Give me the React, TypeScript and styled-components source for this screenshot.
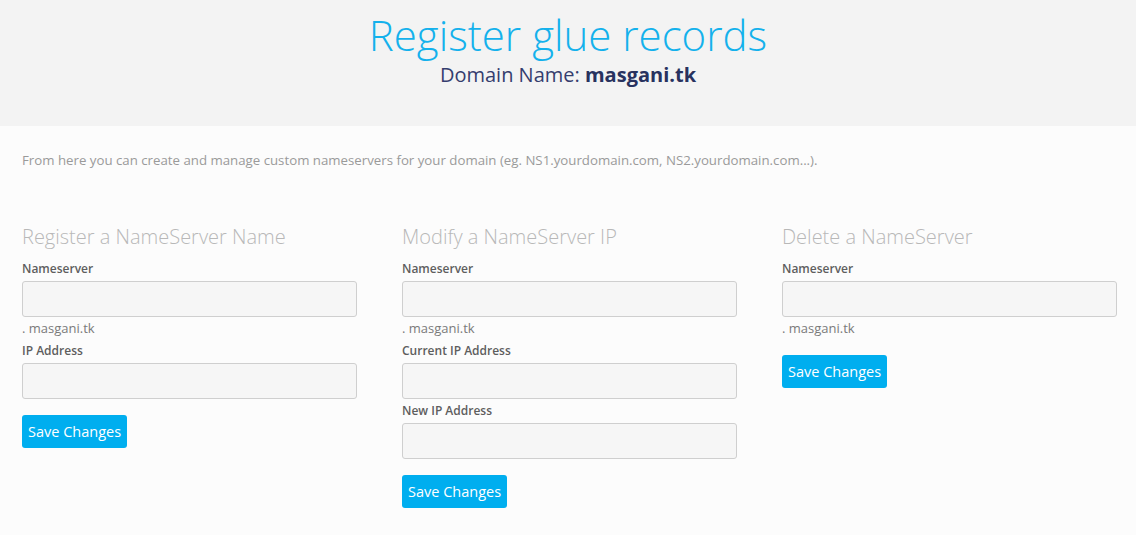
import React from "react";
import styled, { createGlobalStyle } from "styled-components";

const GlobalStyle = createGlobalStyle`
  body {
    margin: 0;
    background: #fcfcfc;
    font-family: "Open Sans", "Liberation Sans", sans-serif;
  }
`;

const Header = styled.header`
  height: 126px;
  background: #f3f3f3;
  display: flex;
  flex-direction: column;
  align-items: center;
  padding-top: 10px;
  box-sizing: border-box;
`;

const Title = styled.h1`
  margin: 0;
  font-size: 42px;
  font-weight: 300;
  line-height: 50px;
  color: #14b1ec;
`;

const Subtitle = styled.h2`
  margin: 2px 0 0;
  font-size: 20px;
  font-weight: 400;
  line-height: 26px;
  color: #353d6e;

  strong {
    font-weight: 700;
    color: #28325f;
  }
`;

const Content = styled.main`
  padding: 24px 22px 0;
`;

const Intro = styled.p`
  margin: 0 0 54px;
  font-size: 13.25px;
  line-height: 20px;
  color: #9a9a9a;
`;

const Columns = styled.div`
  display: grid;
  grid-template-columns: repeat(3, 335px);
  column-gap: 45px;
  align-items: start;
`;

const Panel = styled.section`
  display: flex;
  flex-direction: column;
`;

const PanelTitle = styled.h3`
  margin: 0 0 11px;
  font-size: 20px;
  font-weight: 300;
  line-height: 26px;
  color: #b8b8b8;
`;

const Label = styled.label`
  display: block;
  font-size: 12px;
  font-weight: 600;
  line-height: 16px;
  color: #5e5e5e;
  margin-bottom: 4px;
`;

const Input = styled.input<{ $gap?: number }>`
  box-sizing: border-box;
  width: 100%;
  height: 36px;
  background: #f6f6f6;
  border: 1px solid #cfcfcf;
  border-radius: 3px;
  margin-bottom: ${(p) => p.$gap ?? 4}px;
`;

const Suffix = styled.div`
  font-size: 13px;
  line-height: 20px;
  color: #7a7a7a;
  margin-bottom: 5px;
`;

const SaveButton = styled.button<{ $top: number }>`
  align-self: flex-start;
  margin-top: ${(p) => p.$top}px;
  height: 33px;
  padding: 0 6px;
  border: none;
  border-radius: 3px;
  background: #00aeef;
  color: #fff;
  font-family: "Open Sans", "Liberation Sans", sans-serif;
  font-size: 14.5px;
  cursor: pointer;
`;

export default function App() {
  return (
    <>
      <GlobalStyle />
      <Header>
        <Title>Register glue records</Title>
        <Subtitle>
          Domain Name: <strong>masgani.tk</strong>
        </Subtitle>
      </Header>
      <Content>
        <Intro>
          From here you can create and manage custom nameservers for your domain (eg.
          NS1.yourdomain.com, NS2.yourdomain.com...).
        </Intro>
        <Columns>
          <Panel>
            <PanelTitle>Register a NameServer Name</PanelTitle>
            <Label>Nameserver</Label>
            <Input $gap={1} />
            <Suffix>. masgani.tk</Suffix>
            <Label>IP Address</Label>
            <Input $gap={0} />
            <SaveButton $top={16}>Save Changes</SaveButton>
          </Panel>
          <Panel>
            <PanelTitle>Modify a NameServer IP</PanelTitle>
            <Label>Nameserver</Label>
            <Input $gap={1} />
            <Suffix>. masgani.tk</Suffix>
            <Label>Current IP Address</Label>
            <Input $gap={4} />
            <Label>New IP Address</Label>
            <Input $gap={0} />
            <SaveButton $top={16}>Save Changes</SaveButton>
          </Panel>
          <Panel>
            <PanelTitle>Delete a NameServer</PanelTitle>
            <Label>Nameserver</Label>
            <Input $gap={1} />
            <Suffix>. masgani.tk</Suffix>
            <SaveButton $top={12}>Save Changes</SaveButton>
          </Panel>
        </Columns>
      </Content>
    </>
  );
}
